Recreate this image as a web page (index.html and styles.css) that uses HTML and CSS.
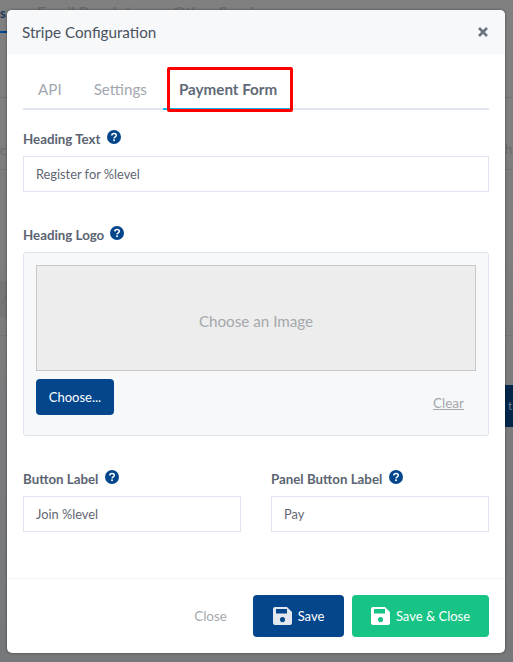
FILE: index.html
```html
<!DOCTYPE html>
<html lang="en">
<head>
    <meta charset="UTF-8">
    <meta name="viewport" content="width=device-width, initial-scale=1.0">
    <title>Stripe Configuration</title>
    <link rel="stylesheet" href="styles.css">
</head>
<body>

<!-- the dimmed page that shows around the modal -->
<div class="page-behind">
    <span class="behind-tab behind-tab-s">s</span>
    <span class="behind-tab-line"></span>
    <span class="behind-tab behind-tab-email">Email Receipts</span>
    <span class="behind-tab behind-tab-other">Other Services</span>
    <span class="behind-rule behind-rule-1"></span>
    <span class="behind-rule behind-rule-2"></span>
    <span class="behind-rule behind-rule-3"></span>
    <span class="behind-cell"></span>
    <span class="behind-text behind-text-left">c</span>
    <span class="behind-text behind-text-right">h</span>
    <span class="behind-text behind-text-cell">/</span>
    <span class="behind-button">t</span>
</div>

<div class="modal">
    <div class="modal-header">
        <h2>Stripe Configuration</h2>
        <svg class="close-x" viewBox="0 0 12 12"><path d="M2 2 L10 10 M10 2 L2 10"/></svg>
    </div>

    <div class="modal-body">
        <div class="tabs">
            <span class="tab">API</span>
            <span class="tab">Settings</span>
            <span class="tab active">Payment Form</span>
        </div>

        <div class="field field-heading">
            <label>Heading Text <svg class="help"><use href="#help-icon"/></svg></label>
            <div class="input">Register for %level</div>
        </div>

        <div class="field field-logo">
            <label>Heading Logo <svg class="help"><use href="#help-icon"/></svg></label>
            <div class="image-box">
                <div class="image-preview">Choose an Image</div>
                <div class="image-actions">
                    <button class="btn btn-blue btn-choose">Choose...</button>
                    <a class="clear-link">Clear</a>
                </div>
            </div>
        </div>

        <div class="field-row">
            <div class="field">
                <label>Button Label <svg class="help"><use href="#help-icon"/></svg></label>
                <div class="input">Join %level</div>
            </div>
            <div class="field">
                <label>Panel Button Label <svg class="help"><use href="#help-icon"/></svg></label>
                <div class="input">Pay</div>
            </div>
        </div>
    </div>

    <div class="modal-footer">
        <span class="close-link">Close</span>
        <button class="btn btn-blue btn-save">
            <svg class="save-icon icon-light"><use href="#save-icon"/></svg>
            Save
        </button>
        <button class="btn btn-green btn-save-close">
            <svg class="save-icon icon-white"><use href="#save-icon"/></svg>
            Save &amp; Close
        </button>
    </div>
</div>

<div class="callout"></div>

<svg class="icon-defs" width="0" height="0">
    <symbol id="help-icon" viewBox="0 0 14 14">
        <circle cx="7" cy="7" r="7" fill="#03468c"/>
        <path d="M4.8 5.4 C4.8 3 9.3 3 9.3 5.4 C9.3 6.9 7.1 6.9 7.1 8.4" fill="none" stroke="#fff" stroke-width="1.5"/>
        <rect x="6.2" y="9.4" width="1.7" height="1.7" fill="#fff"/>
    </symbol>
    <symbol id="save-icon" viewBox="0 0 19 18">
        <path fill-rule="evenodd" fill="currentColor" d="M2 0 H14 L19 5 V16 a2 2 0 0 1 -2 2 H2 a2 2 0 0 1 -2 -2 V2 a2 2 0 0 1 2 -2 Z M3 2 V6.5 H14 V2 Z M9.5 10 a2.6 2.6 0 1 0 0.01 0 Z"/>
    </symbol>
</svg>

</body>
</html>
```

FILE: styles.css
```css
* {
    box-sizing: border-box;
}
body {
    margin: 0;
    height: 662px;
    overflow: hidden;
    position: relative;
    font-family: "Lato", "Open Sans", sans-serif;
    background: linear-gradient(#808080, #77787a);
}
.page-behind {
    color: #6a6a6a;
    font-size: 16px;
}
.behind-tab {
    position: absolute;
    top: 2px;
}
.behind-tab-s {
    left: 0;
    top: 5px;
    font-size: 13px;
    font-weight: 700;
    color: #1d3a5c;
}
.behind-tab-line {
    position: absolute;
    left: 0;
    top: 31px;
    width: 7px;
    height: 2px;
    background-color: #02468c;
}
.behind-tab-email {
    left: 37px;
}
.behind-tab-other {
    left: 173px;
}
.behind-rule {
    position: absolute;
    left: 0;
    width: 513px;
    height: 1px;
    background-color: #737373;
}
.behind-rule-1 {
    top: 97px;
}
.behind-rule-2 {
    top: 169px;
}
.behind-rule-3 {
    top: 335px;
}
.behind-cell {
    position: absolute;
    left: 0;
    top: 281px;
    width: 7px;
    height: 36px;
    background-color: #767676;
}
.behind-text {
    position: absolute;
    font-size: 13px;
    line-height: 18px;
}
.behind-text-left {
    left: 0;
    top: 141px;
}
.behind-text-right {
    left: 505px;
    top: 140px;
}
.behind-text-cell {
    left: 1px;
    top: 291px;
}
.behind-button {
    position: absolute;
    left: 505px;
    top: 385px;
    width: 8px;
    height: 42px;
    padding-left: 3px;
    font-size: 12px;
    line-height: 42px;
    color: #6d7f92;
    background-color: #02264b;
}
.modal {
    position: absolute;
    left: 7px;
    top: 10px;
    width: 498px;
    height: 643px;
    display: flex;
    flex-direction: column;
    background-color: #fff;
    border-radius: 5px;
    overflow: hidden;
    box-shadow: 0 0 3px rgba(0, 0, 0, 0.45);
}
.modal-header {
    height: 44px;
    display: flex;
    align-items: center;
    justify-content: space-between;
    padding: 0 16px 0 15px;
    background-color: #f7f8fa;
}
.modal-header h2 {
    margin: 0;
    font-size: 15.2px;
    font-weight: 400;
    color: #49525e;
}
.close-x {
    width: 12px;
    height: 12px;
    fill: none;
    stroke: #6b7280;
    stroke-width: 2.6;
}
.modal-body {
    flex: 1;
    padding: 0 16px;
}
.tabs {
    display: flex;
    height: 56px;
    padding-top: 20px;
    border-bottom: 2px solid #dfe6f0;
}
.tab {
    padding: 0 16px;
    font-size: 15.2px;
    line-height: 30px;
    height: 36px;
    color: #a3a8af;
}
.tab:first-child {
    padding-left: 15px;
}
.tab.active {
    font-weight: 700;
    color: #606a78;
    border-bottom: 2px solid #11b5e8;
}
.field label {
    display: block;
    font-size: 13.3px;
    font-weight: 700;
    color: #5b6472;
    height: 26px;
}
.field-heading {
    margin-top: 20px;
}
.field-logo {
    margin-top: 34px;
}
.help {
    width: 14px;
    height: 14px;
    margin-left: 3px;
    vertical-align: 0;
}
.input {
    height: 36px;
    padding: 0 12px;
    font-size: 12.8px;
    line-height: 34px;
    color: #5f6672;
    border: 1px solid #dfe6f0;
    background-color: #fff;
}
.image-box {
    height: 184px;
    padding: 12px;
    background-color: #f7f8fa;
    border: 1px solid #dfe6f0;
    border-radius: 3px;
}
.image-preview {
    height: 106px;
    display: flex;
    align-items: center;
    justify-content: center;
    padding-top: 6px;
    font-size: 15.2px;
    color: #a5a8ac;
    background-color: #ededed;
    border: 1px solid #c8c8c8;
}
.image-actions {
    display: flex;
    justify-content: space-between;
    align-items: flex-end;
    margin-top: 8px;
    padding-right: 12px;
}
.btn {
    border: none;
    border-radius: 4px;
    font-family: inherit;
    font-size: 13px;
    color: #fff;
    display: flex;
    align-items: center;
    justify-content: center;
    gap: 6px;
}
.btn-blue {
    background-color: #03468c;
}
.btn-green {
    background-color: #17c485;
}
.btn-choose {
    width: 78px;
    height: 36px;
}
.clear-link {
    font-size: 13.5px;
    color: #a5a8ac;
    text-decoration: underline;
    padding-bottom: 4px;
}
.field-row {
    display: grid;
    grid-template-columns: 218px 218px;
    column-gap: 30px;
    margin-top: 34px;
}
.modal-footer {
    height: 75px;
    display: flex;
    justify-content: flex-end;
    align-items: center;
    gap: 8px;
    padding: 0 16px;
    border-top: 1px solid #f5f5f5;
}
.close-link {
    font-size: 13.5px;
    color: #a5a8ac;
    margin-right: 18px;
}
.btn-save {
    width: 91px;
    height: 42px;
}
.btn-save-close {
    width: 137px;
    height: 42px;
}
.save-icon {
    width: 19px;
    height: 18px;
}
.icon-light {
    color: #e3e8f0;
}
.icon-white {
    color: #fff;
}
.callout {
    position: absolute;
    left: 167px;
    top: 67px;
    width: 126px;
    height: 45px;
    border: 3px solid #f00;
    border-radius: 2px;
}
.icon-defs {
    position: absolute;
}
```
